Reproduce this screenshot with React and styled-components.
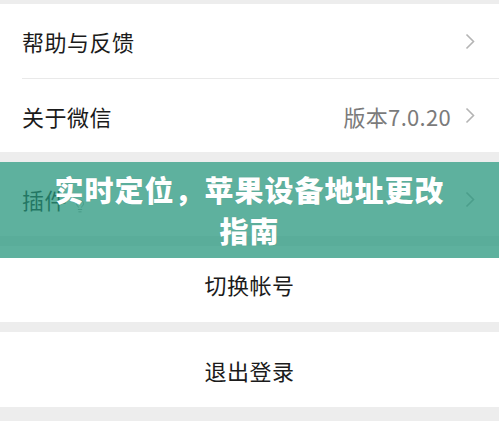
import React from "react";
import styled, { createGlobalStyle } from "styled-components";
import { Lightbulb } from "lucide-react";

const Global = createGlobalStyle`
  html, body {
    margin: 0;
    padding: 0;
    background: #ededed;
  }
  body {
    font-family: "Noto Sans CJK SC", "Noto Sans", sans-serif;
  }
`;

const Page = styled.div`
  position: relative;
  width: 499px;
  height: 421px;
  padding-top: 4px;
  box-sizing: border-box;
  background: #ededed;
  display: flex;
  flex-direction: column;
  gap: ${props => props.gap || 10}px;
  overflow: hidden;
`;

const Group = styled.div`
  background: #ffffff;
  display: flex;
  flex-direction: column;
`;

const Row = styled.div`
  height: ${props => props.height || 74}px;
  padding-left: 22px;
  display: flex;
`;

const RowBody = styled.div`
  flex: 1;
  display: flex;
  align-items: center;
  padding-right: 24px;
  border-top: ${props => (props.divided ? "1px solid #e9e9e9" : "none")};
`;

const Label = styled.span`
  font-size: 22px;
  color: #1b1b1b;
  letter-spacing: 0.5px;
`;

const Value = styled.span`
  margin-left: auto;
  margin-right: 14px;
  font-size: 22px;
  letter-spacing: 0.3px;
  color: #7b7b7b;
`;

const Chevron = styled.svg`
  width: 10px;
  height: 17px;
  margin-left: ${props => (props.pushed ? "auto" : "0")};
  flex-shrink: 0;
`;

const CenterRow = styled.div`
  height: ${props => props.height || 75}px;
  display: flex;
  align-items: center;
  justify-content: center;
  font-size: 22px;
  color: #1b1b1b;
  letter-spacing: 0.5px;
`;

const Bulb = styled.span`
  display: inline-flex;
  margin-left: 6px;
  margin-top: 14px;
  color: #999;
`;

const Banner = styled.div`
  position: absolute;
  left: 0;
  right: 0;
  top: 162px;
  height: 96px;
  background: rgba(38, 150, 124, 0.74);
  display: flex;
  align-items: center;
  justify-content: center;
`;

const BannerTitle = styled.h1`
  margin: 0;
  width: 400px;
  text-align: center;
  font-family: "Noto Sans CJK SC", sans-serif;
  font-weight: 900;
  font-size: 29px;
  line-height: 41px;
  letter-spacing: 1px;
  color: #ffffff;
  text-shadow: 0 0 1px rgba(0, 0, 0, 0.15);
`;

function Arrow({ pushed }) {
  return (
    <Chevron viewBox="0 0 10 17" pushed={pushed}>
      <path d="M1.5 1.5 L8.5 8.5 L1.5 15.5" fill="none" stroke="#b4b4b4" strokeWidth="1.6" />
    </Chevron>
  );
}

export default function App() {
  return (
    <>
      <Global />
      <Page>
        <Group>
          <Row>
            <RowBody>
              <Label>帮助与反馈</Label>
              <Arrow pushed />
            </RowBody>
          </Row>
          <Row>
            <RowBody divided>
              <Label>关于微信</Label>
              <Value>版本7.0.20</Value>
              <Arrow />
            </RowBody>
          </Row>
        </Group>
        <Group>
          <Row>
            <RowBody>
              <Label>插件</Label>
              <Bulb>
                <Lightbulb size={14} strokeWidth={1.5} />
              </Bulb>
              <Arrow pushed />
            </RowBody>
          </Row>
        </Group>
        <Group>
          <CenterRow height={76}>切换帐号</CenterRow>
        </Group>
        <Group>
          <CenterRow height={75}>退出登录</CenterRow>
        </Group>
        <Banner>
          <BannerTitle>实时定位，苹果设备地址更改指南</BannerTitle>
        </Banner>
      </Page>
    </>
  );
}
